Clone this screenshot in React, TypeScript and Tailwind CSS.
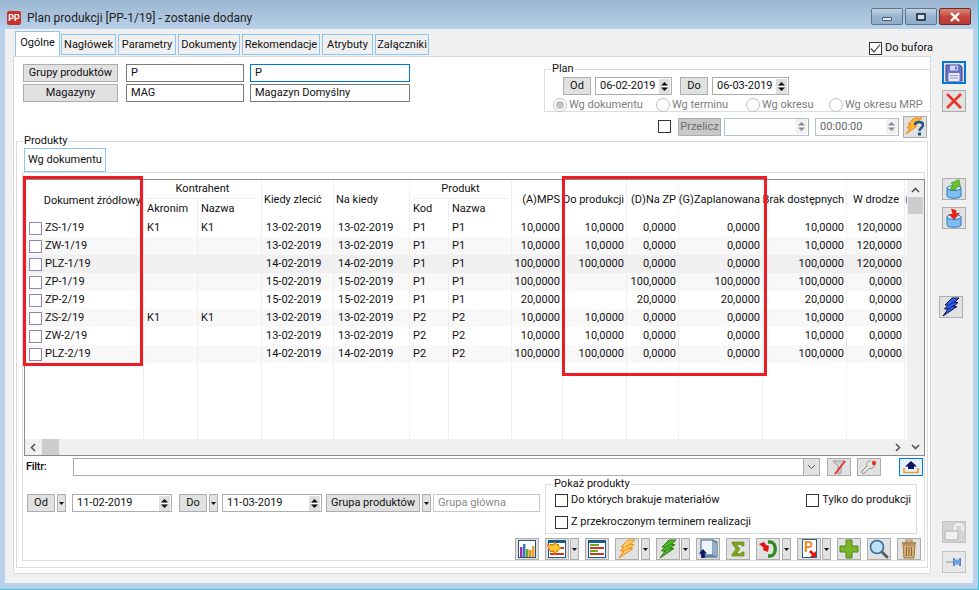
import type { ReactNode } from "react";

const gridCols = "grid grid-cols-[119px_54px_64px_72px_76px_39px_63px_51px_64px_52px_84px_84px_58px_2px]";

const rows = [
  ["ZS-1/19", "K1", "K1", "13-02-2019", "13-02-2019", "P1", "P1", "10,0000", "10,0000", "0,0000", "0,0000", "10,0000", "120,0000"],
  ["ZW-1/19", "", "", "13-02-2019", "13-02-2019", "P1", "P1", "10,0000", "10,0000", "0,0000", "0,0000", "10,0000", "120,0000"],
  ["PLZ-1/19", "", "", "14-02-2019", "14-02-2019", "P1", "P1", "100,0000", "100,0000", "0,0000", "0,0000", "100,0000", "120,0000"],
  ["ZP-1/19", "", "", "15-02-2019", "15-02-2019", "P1", "P1", "100,0000", "", "100,0000", "100,0000", "100,0000", "0,0000"],
  ["ZP-2/19", "", "", "15-02-2019", "15-02-2019", "P1", "P1", "20,0000", "", "20,0000", "20,0000", "20,0000", "0,0000"],
  ["ZS-2/19", "K1", "K1", "13-02-2019", "13-02-2019", "P2", "P2", "10,0000", "10,0000", "0,0000", "0,0000", "10,0000", "0,0000"],
  ["ZW-2/19", "", "", "13-02-2019", "13-02-2019", "P2", "P2", "10,0000", "10,0000", "0,0000", "0,0000", "10,0000", "0,0000"],
  ["PLZ-2/19", "", "", "14-02-2019", "14-02-2019", "P2", "P2", "100,0000", "100,0000", "0,0000", "0,0000", "100,0000", "0,0000"],
];

const rowBg = ["bg-white", "bg-[#f8f8f8]", "bg-[#f0f0f0]", "bg-[#f8f8f8]", "bg-white", "bg-[#f8f8f8]", "bg-white", "bg-[#f8f8f8]"];

function Btn({ w, h = "h-[18px]", children, muted }: { w: string; h?: string; children: ReactNode; muted?: boolean }) {
  return (
    <div className={`${w} ${h} shrink-0 flex items-center justify-center border border-[#adadad] ${muted ? "bg-[#c8c8c8] text-[#6d6d6d]" : "bg-[#e1e1e1]"}`}>
      {children}
    </div>
  );
}

function Tri() {
  return <svg width="5" height="3" viewBox="0 0 5 3"><path d="M0 0 H5 L2.5 3 Z" fill="#111" /></svg>;
}

function Spin({ dim }: { dim?: boolean }) {
  const c = dim ? "#8a8a8a" : "#111";
  return (
    <svg width="11" height="15" viewBox="0 0 11 15" className="shrink-0">
      <rect width="11" height="15" fill={dim ? "#f0f0f0" : "#dedede"} />
      <path d="M5.5 3 L9 6.5 H2 Z" fill={c} />
      <path d="M2 8.5 H9 L5.5 12 Z" fill={c} />
      <path d="M1 7.5 H10" stroke="#fff" />
    </svg>
  );
}

function DateInput({ w, value }: { w: string; value: string }) {
  return (
    <div className={`${w} h-[18px] shrink-0 flex items-center justify-between bg-white border border-[#adadad] pl-[4px] pr-[1px]`}>
      <span>{value}</span>
      <Spin />
    </div>
  );
}

function Check({ checked }: { checked?: boolean }) {
  return (
    <div className="w-[13px] h-[13px] shrink-0 border border-[#333] bg-white flex items-center justify-center">
      {checked && (
        <svg width="11" height="11" viewBox="0 0 11 11">
          <path d="M1 5.5 L4 9 L10 1.5" fill="none" stroke="#444" strokeWidth="1.2" />
        </svg>
      )}
    </div>
  );
}

function Radio({ on, label, w }: { on?: boolean; label: string; w: string }) {
  return (
    <div className={`${w} flex items-center gap-[2px] text-[#7d7d7d]`}>
      <div className="w-[14px] h-[14px] rounded-full border border-[#c0c0c0] bg-white flex items-center justify-center">
        {on && <div className="w-[8px] h-[8px] rounded-full bg-[#c4c4c4]" />}
      </div>
      <span>{label}</span>
    </div>
  );
}

function IconBtn({ children, w = "w-[24px]", h = "h-[22px]", extra = "border-[#adadad] bg-[#e1e1e1]" }: { children: ReactNode; w?: string; h?: string; extra?: string }) {
  return <div className={`${w} ${h} shrink-0 flex items-center justify-center border ${extra}`}>{children}</div>;
}

function Caret({ ml = "ml-[1px]" }: { ml?: string }) {
  return (
    <div className={`${ml} w-[9px] h-[22px] shrink-0 flex items-center justify-center bg-[#e1e1e1] border border-[#adadad]`}>
      <Tri />
    </div>
  );
}

function Bolt({ fill, stroke }: { fill: string; stroke: string }) {
  return (
    <svg width="20" height="20" viewBox="0 0 20 20">
      <path d="M11 1 H18 L13.5 5.5 H17 L12.5 9.5 H16 L2 19 L7 12 H3.5 L7 8 H4 Z" fill={fill} stroke={stroke} strokeWidth="1" strokeLinejoin="round" />
      <path d="M8 8 L14 4.5 M7 12 L13 8.5" stroke={stroke} strokeWidth="0.8" fill="none" />
    </svg>
  );
}

function Stripes({ arrow }: { arrow?: boolean }) {
  return (
    <svg width="20" height="18" viewBox="0 0 20 18">
      <rect x="1.5" y="0.5" width="17" height="17" fill="#fff" stroke="#1c5a86" />
      <rect x="2" y="1" width="16" height="2" fill="#1c5a86" />
      <rect x="3" y="4" width="9" height="2" fill="#6aa82d" />
      <rect x="3" y="7" width="14" height="2" fill="#d8321c" />
      <rect x="3" y="10" width="8" height="2" fill="#6aa82d" />
      <rect x="3" y="13" width="14" height="2" fill="#d8321c" />
      {arrow && <path d="M0 5 H7 V2 L14 8 L7 14 V11 H3 Z" fill="#ffc933" stroke="#f07a10" />}
    </svg>
  );
}

function WindowButton({ w, red, children }: { w: string; red?: boolean; children: ReactNode }) {
  return (
    <div className={`${w} h-[17px] rounded-[2px] border flex items-center justify-center ${red ? "border-[#6d2b28] bg-gradient-to-b from-[#d9867c] via-[#c4483e] to-[#b83c32]" : "border-[#5f7489] bg-gradient-to-b from-[#c5d6e6] via-[#98b4cf] to-[#8eaecc]"}`}>
      {children}
    </div>
  );
}

export default function App() {
  return (
    <div className="w-[979px] h-[590px] relative overflow-hidden flex flex-col bg-[#b9d1ea] border-r border-b border-r-[#3cc4dc] border-b-[#3cc4dc] text-[11px] leading-[14px] text-[#111] font-['Roboto',sans-serif]">
      {/* Title bar */}
      <div className="h-[29px] shrink-0 flex items-center pl-[7px] pr-[7px] bg-gradient-to-b from-[#9ab6d1] to-[#b9d1ea]">
        <div className="w-[14px] h-[14px] mt-[6px] rounded-[2px] bg-[#c8322e] text-white text-[9px] leading-[14px] font-bold text-center shrink-0">PP</div>
        <span className="ml-[6px] mt-[6px] text-[12px] text-[#222]">Plan produkcji [PP-1/19] - zostanie dodany</span>
        <div className="ml-auto flex gap-[2px] mt-[4px]">
          <WindowButton w="w-[32px]"><div className="w-[10px] h-[4px] mt-[4px] bg-[#e8eef4] border border-[#44566a] rounded-[1px]" /></WindowButton>
          <WindowButton w="w-[32px]"><div className="w-[10px] h-[8px] bg-[#d8e2ec] border-2 border-[#33465a] rounded-[1px]" /></WindowButton>
          <WindowButton w="w-[32px]" red>
            <svg width="12" height="10" viewBox="0 0 12 10"><path d="M2 1 L10 9 M10 1 L2 9" stroke="#fff" strokeWidth="2.4" /></svg>
          </WindowButton>
        </div>
      </div>

      <div className="flex-1 min-h-0 flex mx-[5px] mb-[6px] bg-[#f0f0f0]">
        {/* Left: tabs and page */}
        <div className="w-[918px] ml-[8px] shrink-0 flex flex-col">
          <div className="h-[27px] shrink-0 flex items-end pl-[2px]">
            <div className="w-[45px] h-[25px] pb-[2px] flex items-center justify-center bg-white border border-b-0 border-[#8cc6f5]">Ogólne</div>
            <div className="ml-[1px] mb-[1px] w-[55px] h-[21px] flex items-center justify-center border border-[#8cc6f5]">Nagłówek</div>
            <div className="ml-[2px] mb-[1px] w-[58px] h-[21px] flex items-center justify-center border border-[#8cc6f5]">Parametry</div>
            <div className="ml-[2px] mb-[1px] w-[62px] h-[21px] flex items-center justify-center border border-[#8cc6f5]">Dokumenty</div>
            <div className="ml-[2px] mb-[1px] w-[78px] h-[21px] flex items-center justify-center border border-[#8cc6f5]">Rekomendacje</div>
            <div className="ml-[2px] mb-[1px] w-[51px] h-[21px] flex items-center justify-center border border-[#8cc6f5]">Atrybuty</div>
            <div className="ml-[2px] mb-[1px] w-[54px] h-[21px] flex items-center justify-center border border-[#8cc6f5]">Załączniki</div>
            <div className="ml-auto mb-[1px] -mr-[2px] flex items-center gap-[3px]">
              <Check checked />
              <span>Do bufora</span>
            </div>
          </div>

          {/* Page */}
          <div className="h-[518px] shrink-0 bg-white border border-[#d9d9d9] flex flex-col">
            <div className="h-[77px] shrink-0 flex justify-between">
              <div className="pl-[9px] pt-[7px] flex flex-col gap-[2px]">
                <div className="flex">
                  <Btn w="w-[95px]">Grupy produktów</Btn>
                  <div className="ml-[8px] w-[118px] h-[18px] border border-[#7a7a7a] pl-[4px] flex items-center">P</div>
                  <div className="ml-[6px] w-[160px] h-[18px] border border-[#0078d7] pl-[4px] flex items-center">P</div>
                </div>
                <div className="flex">
                  <Btn w="w-[95px]">Magazyny</Btn>
                  <div className="ml-[8px] w-[118px] h-[18px] border border-[#7a7a7a] pl-[4px] flex items-center">MAG</div>
                  <div className="ml-[6px] w-[160px] h-[18px] border border-[#7a7a7a] pl-[4px] flex items-center">Magazyn Domyślny</div>
                </div>
              </div>
              <div className="w-[386px] pt-[5px] shrink-0">
                <fieldset className="h-[50px] border border-r-0 border-[#dcdcdc] pl-[8px]">
                  <legend className="-ml-[2px] px-[1px]">Plan</legend>
                  <div className="flex items-center ml-[10px] mt-[1px]">
                    <Btn w="w-[28px]">Od</Btn>
                    <div className="ml-[4px]"><DateInput w="w-[77px]" value="06-02-2019" /></div>
                    <div className="ml-[8px]"><Btn w="w-[28px]">Do</Btn></div>
                    <div className="ml-[4px]"><DateInput w="w-[77px]" value="06-03-2019" /></div>
                  </div>
                  <div className="flex items-center mt-[3px]">
                    <Radio on label="Wg dokumentu" w="w-[103px]" />
                    <Radio label="Wg terminu" w="w-[90px]" />
                    <Radio label="Wg okresu" w="w-[83px]" />
                    <Radio label="Wg okresu MRP" w="w-[100px]" />
                  </div>
                </fieldset>
                <div className="mt-[4px] h-[21px] flex items-center pl-[114px]">
                  <Check />
                  <div className="ml-[7px]"><Btn w="w-[43px]" muted>Przelicz</Btn></div>
                  <div className="ml-[3px] w-[85px] h-[18px] flex justify-end items-center bg-white border border-[#a9c4de] border-r-[#adadad] pr-[1px]"><Spin dim /></div>
                  <div className="ml-[6px] w-[84px] h-[18px] flex justify-between items-center bg-white border border-[#a9c4de] border-r-[#adadad] pl-[4px] pr-[1px] text-[#666]">
                    <span>00:00:00</span>
                    <Spin dim />
                  </div>
                  <div className="ml-[4px]">
                    <IconBtn>
                      <svg width="20" height="20" viewBox="0 0 20 20">
                        <path d="M9 1 H17 L12 5 H15 L9 9 H12 L1 17 L5 11 H2 L5 7 H3 Z" fill="#ffb52e" stroke="#f07a10" strokeWidth="0.8" />
                        <path d="M10 8 C10 4 18 4 18 8 C18 11 14.5 10.5 14.5 14" fill="none" stroke="#1d5a8a" strokeWidth="2.4" />
                        <rect x="13" y="15.5" width="3" height="3" fill="#1d5a8a" />
                      </svg>
                    </IconBtn>
                  </div>
                </div>
              </div>
            </div>

            {/* Produkty */}
            <fieldset className="ml-[2px] w-[912px] h-[434px] border border-[#dcdcdc] pl-[5px]">
              <legend className="ml-[1px] px-[1px]">Produkty</legend>
              <div className="ml-[2px] w-[82px] h-[24px] flex items-center pl-[3px] bg-white border border-[#8cc6f5] whitespace-nowrap">Wg dokumentu</div>
              <div className="w-[903px] h-[389px] border border-[#dcdcdc] pl-[1px] pt-[6px]">
                {/* Table */}
                <div className="w-[901px] h-[277px] border border-[#8a8a8a] flex flex-col">
                  <div className="h-[259px] flex">
                    <div className="w-[882px] flex flex-col">
                      <div className={`${gridCols} grid-rows-[19px_20px] h-[39px] shrink-0`}>
                        <div className="row-span-2 border-r border-[#efefef] flex items-center justify-end pr-[2px]"><span className="mt-[2px]">Dokument źródłowy</span></div>
                        <div className="col-span-2 border-r border-[#efefef] px-[3px] flex items-center justify-center border-b-0"><span className="w-full text-center border-b border-[#e4edf5] leading-[18px]">Kontrahent</span></div>
                        <div className="row-span-2 border-r border-[#efefef] flex items-center pl-[2px]">Kiedy zlecić</div>
                        <div className="row-span-2 border-r border-[#efefef] flex items-center pl-[2px]">Na kiedy</div>
                        <div className="col-span-2 border-r border-[#efefef] px-[3px] flex items-center justify-center"><span className="w-full text-center border-b border-[#e4edf5] leading-[18px]">Produkt</span></div>
                        {["(A)MPS", "Do produkcji", "(D)Na ZP", "(G)Zaplanowana", "Brak dostępnych"].map((t) => (
                          <div key={t} className="row-span-2 border-r border-[#efefef] overflow-hidden flex items-center justify-end pr-[2px] whitespace-nowrap">{t}</div>
                        ))}
                        <div className="row-span-2 border-r border-[#efefef] overflow-hidden flex items-center justify-end pr-[5px] whitespace-nowrap">W drodze</div>
                        <div className="row-span-2 overflow-hidden flex items-center text-[#2a6fb0]">(</div>
                        <div className="border-r border-[#efefef] pl-[3px] flex items-center">Akronim</div>
                        <div className="border-r border-[#efefef] pl-[3px] flex items-center">Nazwa</div>
                        <div className="border-r border-[#efefef] pl-[3px] flex items-center">Kod</div>
                        <div className="border-r border-[#efefef] pl-[3px] flex items-center">Nazwa</div>
                      </div>
                      {rows.map((r, i) => (
                        <div key={i} className={`${gridCols} h-[18px] shrink-0 ${rowBg[i]}`}>
                          {r.map((c, j) => (
                            <div key={j} className={`border-r border-[#efefef] flex items-center whitespace-nowrap ${j === 0 ? "pl-[4px]" : j === 3 || j === 4 ? "pl-[4px]" : j <= 6 ? "pl-[3px]" : "justify-end pr-[2px]"}`}>
                              {j === 0 && <div className="w-[13px] h-[13px] mr-[3px] shrink-0 border border-[#8d86b0] bg-white" />}
                              {c}
                            </div>
                          ))}
                          <div />
                        </div>
                      ))}
                      <div className={`${gridCols} flex-1`}>
                        {Array.from({ length: 13 }, (_, i) => (
                          <div key={i} className="border-r border-[#efefef]" />
                        ))}
                      </div>
                    </div>
                    {/* Vertical scrollbar */}
                    <div className="w-[17px] bg-[#f0f0f0] flex flex-col items-center">
                      <svg width="9" height="6" viewBox="0 0 9 6" className="mt-[7px]"><path d="M1 5 L4.5 1.5 L8 5" fill="none" stroke="#555" strokeWidth="1.6" /></svg>
                      <div className="w-[15px] h-[17px] mt-[4px] bg-[#cdcdcd]" />
                    </div>
                  </div>
                  {/* Horizontal scrollbar */}
                  <div className="flex-1 bg-[#f0f0f0] flex items-center pl-[5px] pr-[4px]">
                    <svg width="6" height="9" viewBox="0 0 6 9"><path d="M5 1 L1.5 4.5 L5 8" fill="none" stroke="#555" strokeWidth="1.6" /></svg>
                    <div className="w-[17px] h-[16px] ml-[6px] bg-[#cdcdcd]" />
                    <svg width="6" height="9" viewBox="0 0 6 9" className="ml-auto"><path d="M1 1 L4.5 4.5 L1 8" fill="none" stroke="#555" strokeWidth="1.6" /></svg>
                    <svg width="9" height="6" viewBox="0 0 9 6" className="ml-[10px]"><path d="M1 1 L4.5 4.5 L8 1" fill="none" stroke="#555" strokeWidth="1.6" /></svg>
                  </div>
                </div>

                {/* Filter */}
                <div className="h-[18px] mt-[2px] flex items-center pl-[2px]">
                  <span className="w-[47px] font-medium tracking-[-0.3px]">Filtr:</span>
                  <div className="w-[747px] h-[18px] flex justify-end border border-[#adadad]">
                    <div className="w-[16px] bg-[#e1e1e1] border-l border-[#adadad] flex items-center justify-center">
                      <svg width="9" height="6" viewBox="0 0 9 6"><path d="M1 1 L4.5 4.5 L8 1" fill="none" stroke="#555" strokeWidth="1" /></svg>
                    </div>
                  </div>
                  <div className="ml-[7px]">
                    <IconBtn h="h-[18px]">
                      <svg width="18" height="15" viewBox="0 0 18 15">
                        <path d="M3 1 H15 L11 6 V13 L8 14 V6 Z" fill="#d4d4d4" stroke="#9a9a9a" />
                        <path d="M15 1 L5 14" stroke="#e8342a" strokeWidth="2" />
                      </svg>
                    </IconBtn>
                  </div>
                  <div className="ml-[6px]">
                    <IconBtn h="h-[18px]">
                      <svg width="18" height="15" viewBox="0 0 18 15">
                        <path d="M11 1 C7 1 6 4 7 6 L2 11 C1 13 3 14 4.5 13 L9 8.5 C12 9 15 7 14 4" fill="#e6e6e6" stroke="#8a8a8a" />
                        <circle cx="14" cy="3" r="2.2" fill="#dc3b22" />
                      </svg>
                    </IconBtn>
                  </div>
                  <div className="ml-[18px]">
                    <IconBtn h="h-[18px]" extra="border-[#0078d7] bg-[#e5f1fb]">
                      <svg width="18" height="14" viewBox="0 0 18 14">
                        <path d="M9 1 L15 6.5 H12 V9 H6 V6.5 H3 Z" fill="#0f1560" />
                        <path d="M2 8 V12.5 H16 V8" fill="none" stroke="#e8a020" strokeWidth="1.6" />
                      </svg>
                    </IconBtn>
                  </div>
                </div>

                {/* Date range and show options */}
                <div className="flex h-[57px] mt-[1px]">
                  <div className="w-[521px] pl-[3px] pt-[17px] flex items-start">
                    <Btn w="w-[28px]">Od</Btn>
                    <div className="ml-[2px]"><Btn w="w-[9px]"><Tri /></Btn></div>
                    <div className="ml-[6px]"><DateInput w="w-[100px]" value="11-02-2019" /></div>
                    <div className="ml-[7px]"><Btn w="w-[28px]">Do</Btn></div>
                    <div className="ml-[2px]"><Btn w="w-[9px]"><Tri /></Btn></div>
                    <div className="ml-[4px]"><DateInput w="w-[100px]" value="11-03-2019" /></div>
                    <div className="ml-[4px]"><Btn w="w-[94px]">Grupa produktów</Btn></div>
                    <div className="ml-[2px]"><Btn w="w-[9px]"><Tri /></Btn></div>
                    <div className="ml-[2px] w-[107px] h-[18px] border border-[#c8c8c8] pl-[4px] flex items-center text-[#8a8a8a]">Grupa główna</div>
                  </div>
                  <fieldset className="w-[372px] h-[57px] border border-[#dcdcdc] pl-[9px]">
                    <legend className="-ml-[2px] px-[1px]">Pokaż produkty</legend>
                    <div className="flex items-center mt-[2px] pr-[5px]">
                      <Check />
                      <span className="ml-[3px]">Do których brakuje materiałów</span>
                      <div className="ml-auto flex items-center gap-[3px]"><Check /><span>Tylko do produkcji</span></div>
                    </div>
                    <div className="flex items-center mt-[8px]">
                      <Check />
                      <span className="ml-[3px]">Z przekroczonym terminem realizacji</span>
                    </div>
                  </fieldset>
                </div>

                {/* Toolbar */}
                <div className="mt-[4px] pr-[3px] flex justify-end items-center">
                  <IconBtn>
                    <svg width="20" height="18" viewBox="0 0 20 18">
                      <rect x="1.5" y="0.5" width="17" height="17" fill="#fff" stroke="#1c5a86" />
                      <rect x="3" y="7" width="2.5" height="10" fill="#9a2fb0" />
                      <rect x="6" y="4" width="2.5" height="13" fill="#3a7ab5" />
                      <rect x="9" y="9" width="2.5" height="8" fill="#6aa82d" />
                      <rect x="12" y="10" width="2.5" height="7" fill="#f08a10" />
                      <rect x="15" y="6" width="2.5" height="11" fill="#f0a030" />
                    </svg>
                  </IconBtn>
                  <div className="ml-[6px]"><IconBtn><Stripes arrow /></IconBtn></div>
                  <Caret />
                  <div className="ml-[6px]"><IconBtn><Stripes /></IconBtn></div>
                  <div className="ml-[6px]"><IconBtn><Bolt fill="#ffc964" stroke="#f08a10" /></IconBtn></div>
                  <Caret ml="ml-[2px]" />
                  <div className="ml-[6px]"><IconBtn><Bolt fill="#4fb52a" stroke="#2c7a14" /></IconBtn></div>
                  <Caret />
                  <div className="ml-[6px]">
                    <IconBtn>
                      <svg width="20" height="20" viewBox="0 0 20 20">
                        <rect x="7" y="3" width="12" height="15" fill="#fff" stroke="#2c5f8a" />
                        <rect x="5" y="2" width="12" height="15" fill="#fff" stroke="#2c5f8a" />
                        <rect x="3" y="1" width="12" height="15" fill="#eef3fa" stroke="#2c5f8a" />
                        <path d="M5 10 L9 14.5 H6.8 V19 H3.2 V14.5 H1 Z" fill="#0f1560" />
                      </svg>
                    </IconBtn>
                  </div>
                  <div className="ml-[6px]">
                    <IconBtn>
                      <svg width="18" height="18" viewBox="0 0 18 18">
                        <path d="M3 2 H15 V6 H13 L12 4.5 H7.5 L11 9 L7.5 13.5 H12 L13 12 H15 V16 H3 V14.5 L7 9 L3 3.5 Z" fill="#7ea61a" stroke="#5c7d10" strokeWidth="0.6" />
                      </svg>
                    </IconBtn>
                  </div>
                  <div className="ml-[6px]">
                    <IconBtn>
                      <svg width="20" height="20" viewBox="0 0 20 20">
                        <path d="M10 3 H12 C19 3 19 17 12 17 H10" fill="none" stroke="#2f8a22" strokeWidth="3.4" />
                        <path d="M12.5 7 C14.5 7 14.5 13 12.5 13" fill="none" stroke="#d6f0c8" strokeWidth="1" />
                        <path d="M1 5 L6 3 L8 6 L11 7 L10 13 L5 11 L5.5 8.5 Z" fill="#e01414" />
                      </svg>
                    </IconBtn>
                  </div>
                  <Caret ml="ml-[2px]" />
                  <div className="ml-[6px]">
                    <IconBtn>
                      <div className="relative w-[20px] h-[20px] flex">
                        <div className="ml-[3px] w-[15px] h-[19px] bg-white border border-[#2c5f8a] text-[#f08a24] text-[14px] leading-[14px] font-bold pl-[1px]">P</div>
                        <svg width="10" height="9" viewBox="0 0 10 9" className="absolute right-0 bottom-0"><path d="M0 2 L2 0 L5 3 L7 1 V7 H1 L3 5 Z" fill="#e01414" /></svg>
                      </div>
                    </IconBtn>
                  </div>
                  <Caret />
                  <div className="ml-[6px]">
                    <IconBtn>
                      <svg width="20" height="20" viewBox="0 0 20 20"><path d="M7 1 H13 V7 H19 V13 H13 V19 H7 V13 H1 V7 H7 Z" fill="#79b52a" stroke="#4c8516" /></svg>
                    </IconBtn>
                  </div>
                  <div className="ml-[6px]">
                    <IconBtn>
                      <svg width="20" height="20" viewBox="0 0 20 20">
                        <path d="M12 12 L18 18" stroke="#5d5d5d" strokeWidth="3" strokeLinecap="round" />
                        <circle cx="8" cy="8" r="6.5" fill="#bfe0f5" stroke="#2f6f9f" strokeWidth="1.6" />
                      </svg>
                    </IconBtn>
                  </div>
                  <div className="ml-[6px]">
                    <IconBtn>
                      <svg width="18" height="20" viewBox="0 0 18 20">
                        <rect x="6" y="1" width="6" height="2" fill="none" stroke="#a9834f" />
                        <rect x="2" y="3" width="14" height="2.5" fill="#b08a55" />
                        <path d="M3 6 H15 L14 19 H4 Z" fill="#d4b078" stroke="#a07840" />
                        <path d="M6.5 8 V17 M9 8 V17 M11.5 8 V17" stroke="#8f6a35" />
                      </svg>
                    </IconBtn>
                  </div>
                </div>
              </div>
            </fieldset>
          </div>
        </div>

        {/* Right toolbar */}
        <div className="flex-1 flex flex-col pl-[11px]">
          <div className="mt-[32px]">
            <IconBtn h="h-[23px]" extra="border-2 border-[#0078d7] bg-[#e1e1e1]">
              <svg width="18" height="18" viewBox="0 0 18 18">
                <path d="M1 1 H15 L17 3 V17 H1 Z" fill="#6a72c8" stroke="#3d4494" />
                <rect x="5" y="1.5" width="8" height="5" fill="#d5d9f2" />
                <rect x="10" y="2.5" width="2" height="3" fill="#6a72c8" />
                <rect x="3.5" y="9" width="11" height="8" fill="#e8eaf6" />
                <path d="M5 11.5 H13 M5 14 H13" stroke="#8f96c8" />
              </svg>
            </IconBtn>
          </div>
          <div className="mt-[6px]">
            <IconBtn>
              <svg width="18" height="18" viewBox="0 0 18 18"><path d="M2 2 L16 16 M16 2 L2 16" stroke="#e8352a" strokeWidth="2.6" /></svg>
            </IconBtn>
          </div>
          <div className="mt-[66px]">
            <IconBtn>
              <svg width="18" height="20" viewBox="0 0 18 20">
                <path d="M2 9 V17 C2 20 16 20 16 17 V9 Z" fill="#7dbdf0" stroke="#2f7cc0" />
                <ellipse cx="9" cy="9" rx="7" ry="2.5" fill="#c8e4fa" stroke="#2f7cc0" />
                <path d="M5 11 L8 5 L6 4 L14 0.5 L15.5 8 L13 7 L10 11 Z" fill="#66c22e" stroke="#3f8f18" strokeWidth="0.6" />
              </svg>
            </IconBtn>
          </div>
          <div className="mt-[7px]">
            <IconBtn>
              <svg width="18" height="20" viewBox="0 0 18 20">
                <path d="M2 9 V17 C2 20 16 20 16 17 V9 Z" fill="#7dbdf0" stroke="#2f7cc0" />
                <ellipse cx="9" cy="9" rx="7" ry="2.5" fill="#c8e4fa" stroke="#2f7cc0" />
                <path d="M6 0.5 L11 2 L11.5 5 H15 L9 12 L3.5 6 L7.5 6 Z" fill="#e6261c" />
              </svg>
            </IconBtn>
          </div>
          <div className="mt-[67px] -ml-[3px]">
            <IconBtn><Bolt fill="#2f5fe8" stroke="#10104f" /></IconBtn>
          </div>
          <div className="mt-[203px]">
            <IconBtn extra="border-[#c4c4c4] bg-[#d4d4d4]">
              <svg width="20" height="19" viewBox="0 0 20 19">
                <path d="M11 9 V5 C11 0 18.5 0 18.5 5 V8" fill="none" stroke="#f4f4f4" strokeWidth="2" />
                <rect x="1" y="8" width="13" height="9" rx="1" fill="#f0f0f0" stroke="#b0b0b0" />
              </svg>
            </IconBtn>
          </div>
          <div className="mt-[8px]">
            <IconBtn extra="border-[#c4c4c4] bg-[#e8e8e8]">
              <svg width="18" height="14" viewBox="0 0 18 14">
                <path d="M1 7 H9" stroke="#a8a8a8" strokeWidth="1.4" />
                <path d="M9 3 V11 M15 3 V11" stroke="#4a8ad0" strokeWidth="2" />
                <rect x="9" y="4.5" width="6" height="5" fill="#6ea6e0" />
              </svg>
            </IconBtn>
          </div>
        </div>
      </div>

      {/* Annotations drawn over the window */}
      <div className="absolute left-[23px] top-[176px] w-[120px] h-[190px] border-[3px] border-[#ed1c24] pointer-events-none" />
      <div className="absolute left-[562px] top-[176px] w-[205px] h-[200px] border-[3px] border-[#ed1c24] pointer-events-none" />
    </div>
  );
}
